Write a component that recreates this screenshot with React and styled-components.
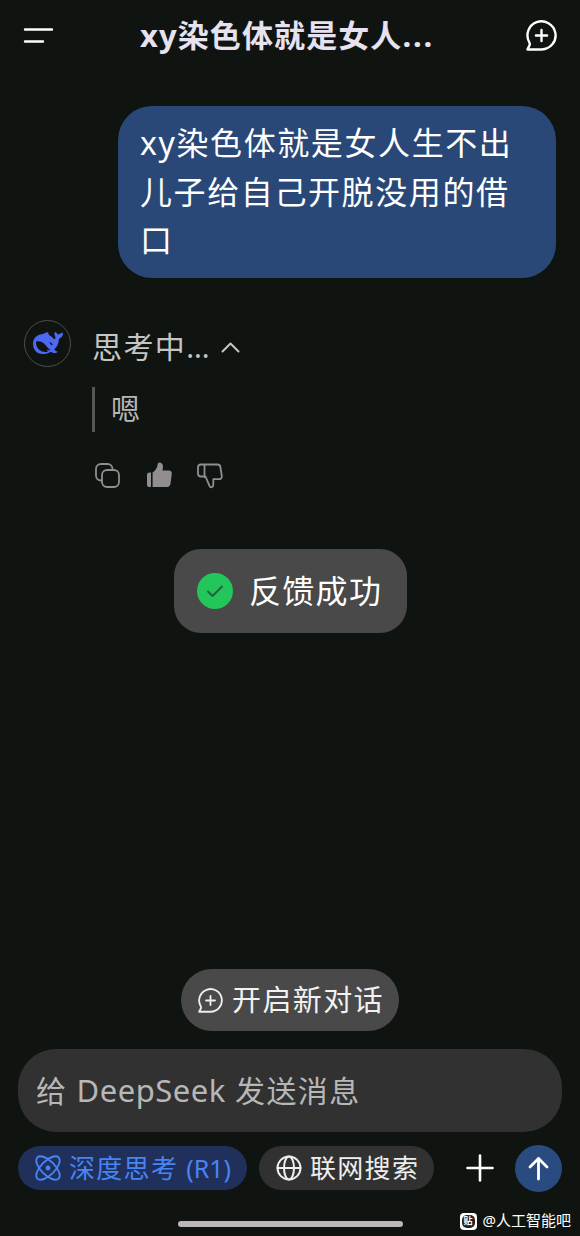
import React from "react"
import styled, { createGlobalStyle } from "styled-components"

const GlobalStyle = createGlobalStyle`
  body {
    margin: 0;
    background: #101411;
  }
  * {
    box-sizing: border-box;
  }
`

const Screen = styled.div`
  position: relative;
  display: flex;
  flex-direction: column;
  width: 580px;
  height: 1236px;
  overflow: hidden;
  background: #101411;
  font-family: "Noto Sans", "Noto Sans CJK SC", sans-serif;
  color: #fff;
`

const Label = styled.span`
  padding-bottom: 1px;
  font-size: ${props => props.$size}px;
  letter-spacing: ${props => props.$spacing || 0}px;
  font-weight: ${props => props.$weight || 400};
  line-height: 1;
  color: ${props => props.$color || "#fff"};
  white-space: nowrap;
`

// Latin letters and dots are set tighter than the Chinese text around them
const Latin = styled.span`
  font-size: ${props => props.$size ? props.$size + "px" : "inherit"};
  letter-spacing: ${props => props.$spacing || 0}px;
`

const Title = styled(Label)`
  margin: 0 6px 0 0;
`

const Icon = styled.svg`
  display: block;
  flex: none;
  fill: none;
  stroke: ${props => props.$color || "#fff"};
  stroke-linecap: round;
  stroke-linejoin: round;
`

const Header = styled.header`
  display: flex;
  flex: none;
  align-items: center;
  justify-content: space-between;
  height: 71px;
  padding: 0 23px;
`

const Conversation = styled.main`
  display: flex;
  flex-direction: column;
  height: 898px;
  padding: 35px 24px 0;
`

const Bubble = styled.div`
  align-self: flex-end;
  width: 438px;
  height: 172px;
  padding: 13px 20px 13px 22px;
  border-radius: 34px;
  background: #294877;
  font-size: 32px;
  letter-spacing: 1.6px;
  line-height: 48.6px;
`

const Reply = styled.div`
  display: flex;
  gap: 21px;
  margin-top: 42px;
`

const Avatar = styled.div`
  display: flex;
  align-items: center;
  justify-content: center;
  width: 47px;
  height: 47px;
  border: 1.5px solid #4b4e4a;
  border-radius: 50%;
`

const ReplyBody = styled.div`
  display: flex;
  flex-direction: column;
`

const Thinking = styled.div`
  display: flex;
  align-items: center;
  gap: 11px;
  height: 54px;
`

const Thought = styled.div`
  display: flex;
  align-items: center;
  height: 45px;
  margin-top: 13px;
  padding: 0 0 2px 16px;
  border-left: 3px solid #555655;
`

const Actions = styled.div`
  display: flex;
  align-items: center;
  gap: 25.5px;
  margin: 30px 0 0 3px;
`

const Toast = styled.div`
  position: absolute;
  top: 549px;
  left: 174px;
  display: flex;
  align-items: center;
  gap: 16px;
  width: 233px;
  height: 84px;
  padding-left: 23px;
  border-radius: 27px;
  background: #484948;
`

const Success = styled.div`
  display: flex;
  align-items: center;
  justify-content: center;
  width: 36px;
  height: 36px;
  border-radius: 50%;
  background: #23c65b;
`

const NewChat = styled.div`
  display: flex;
  flex: none;
  align-self: center;
  align-items: center;
  gap: 9px;
  width: 218px;
  height: 62px;
  padding-left: 17px;
  border-radius: 31px;
  background: #484948;
`

const Composer = styled.div`
  display: flex;
  flex: none;
  align-items: center;
  height: 83px;
  margin: 18px 18px 0;
  padding-left: 18px;
  border-radius: 38px;
  background: #313131;
`

const Toolbar = styled.div`
  display: flex;
  flex: none;
  align-items: center;
  height: 48px;
  margin: 12px 18px 0;
`

const Pill = styled.div`
  display: flex;
  align-items: center;
  gap: 8px;
  width: ${props => props.$width}px;
  height: 44px;
  padding-left: 17px;
  margin-right: 12px;
  border-radius: 22px;
  background: ${props => props.$bg};
`

const Send = styled.div`
  display: flex;
  align-items: center;
  justify-content: center;
  width: 47px;
  height: 47px;
  margin-left: auto;
  border-radius: 50%;
  background: #294b80;
`

const Attach = styled.div`
  margin-left: 20px;
`

const HomeBar = styled.div`
  flex: none;
  align-self: center;
  width: 225px;
  height: 6px;
  margin-top: 29px;
  border-radius: 3px;
  background: #bcb8ba;
`

const Watermark = styled.div`
  position: absolute;
  right: 9px;
  bottom: 6px;
  display: flex;
  align-items: center;
  gap: 6px;
  height: 18px;
`

const Badge = styled.div`
  display: flex;
  align-items: center;
  justify-content: center;
  width: 17px;
  height: 17px;
  border-radius: 4px;
  background: #fff;
`

const BadgeInner = styled.div`
  display: flex;
  align-items: center;
  justify-content: center;
  width: 13px;
  height: 13px;
  border-radius: 5px;
  background: #222522;
`

function ChatPlus({ size, color, weight }) {
  return (
    <Icon width={size} height={size} viewBox="0 0 30 30" $color={color} strokeWidth={weight}>
      <path d="M1.4 28.5h13.7A13.6 13.6 0 1 0 3.3 21.8c.5.8.5 1.6.2 2.5z" />
      <path d="M15 9.6v10.8M9.6 15h10.8" />
    </Icon>
  )
}

function Whale() {
  return (
    <svg width="32" height="25" viewBox="0 0 96 75">
      <path
        fill="#4c69f5"
        d="M3 38C3 21 17 9 34 9c4-3 10-6 15-5-2 4 1 7 5 10 6 3 9 8 14 11 3-2 3-5 1-9-2-4-2-8-1-13 4 0 7 4 10 8 4-4 9-5 15-6 1 9-4 15-12 18-1 14-5 24-14 31 2 6 6 7 11 8-5 5-15 5-21 0C39 72 19 71 10 59 5 53 3 46 3 38z"
      />
      <path
        fill="#101411"
        d="M12 32c8-3 17-1 25 6 7 7 11 14 18 19-3 2-6 1-9-1-1 3 0 4 2 6C27 67 11 51 12 32z"
      />
      <path fill="#101411" d="M52 34c4-1 9 3 10 9-3-1-4-1-6-3-1-2-3-3-4-6z" />
    </svg>
  )
}

function Thumb({ filled }) {
  return (
    <Icon
      width="26"
      height="27"
      viewBox="0 0 26 27"
      $color="#918e91"
      strokeWidth="1.8"
      transform={filled ? undefined : "scale(1 -1)"}
    >
      {filled ? (
        <g fill="#918e91" stroke="none">
          <path d="M5 10.5H3.5A2.5 2.5 0 0 0 1 13v9.5A2.5 2.5 0 0 0 3.5 25H5z" />
          <path d="M6.6 10.5c3-2 4.5-4.5 5-8C12 .5 14 0 15.6 1.2c2 1.6 1.5 4.5.8 7.4H23c2 0 3 1.4 2.8 3.2l-1.3 10c-.3 2-1.4 3.2-3.5 3.2H6.6z" />
        </g>
      ) : (
        <path d="M7.5 12v12.5M7.5 12.5h1l4-9.3c1-2.4 3.8-1.5 3.8.8v5.8h5.5c2 0 3.3 1.3 3 3.3l-1.4 8.9c-.3 1.7-1.3 2.5-3 2.5H4c-2 0-3-1-3-3v-6c0-2 1-3 3-3z" />
      )}
    </Icon>
  )
}

function App() {
  return (
    <Screen>
      <GlobalStyle />
      <Header>
        <Icon width="31" height="18" strokeWidth="2.4">
          <path d="M2 2.5h27M2 14.5h18" />
        </Icon>
        <Title as="h1" $size={31} $spacing={1.1} $weight={700} $color="#e6e2ef">
          xy染色体就是女人<Latin $spacing={1.8}>...</Latin>
        </Title>
        <ChatPlus size={31} weight={2.3} />
      </Header>

      <Conversation>
        <Bubble>xy染色体就是女人生不出儿子给自己开脱没用的借口</Bubble>
        <Reply>
          <Avatar>
            <Whale />
          </Avatar>
          <ReplyBody>
            <Thinking>
              <Label $size={30} $spacing={1.4} $color="#c6c5c6">
                思考中<Latin $size={29}>...</Latin>
              </Label>
              <Icon width="19" height="12" $color="#c6c5c6" strokeWidth="2">
                <path d="M1.5 10.5l8-8 8 8" />
              </Icon>
            </Thinking>
            <Thought>
              <Label $size={29} $color="#b8b7b8">嗯</Label>
            </Thought>
            <Actions>
              <Icon width="25" height="25" $color="#918e91" strokeWidth="1.8">
                <rect x="7" y="7" width="17" height="17" rx="5" />
                <path d="M6.8 17.5H6a5 5 0 0 1-5-5V6a5 5 0 0 1 5-5h6.5a5 5 0 0 1 5 5v.8" />
              </Icon>
              <Thumb filled />
              <Thumb />
            </Actions>
          </ReplyBody>
        </Reply>
      </Conversation>

      <Toast>
        <Success>
          <Icon width="18" height="14" $color="#24613b" strokeWidth="2">
            <path d="M2 7.5l4.5 4.5L16 2.5" />
          </Icon>
        </Success>
        <Label $size={32} $spacing={1.3}>反馈成功</Label>
      </Toast>

      <NewChat>
        <ChatPlus size={25} color="#eee" weight={2.2} />
        <Label $size={29} $spacing={1.4} $color="#f2f2f2">开启新对话</Label>
      </NewChat>
      <Composer>
        <Label $size={30} $spacing={1.4} $color="#b7b7b7">
          给 <Latin $size={31} $spacing={0.5}>DeepSeek</Latin> 发送消息
        </Label>
      </Composer>
      <Toolbar>
        <Pill $width={229} $bg="#20305a">
          <Icon width="26" height="26" viewBox="0 0 26 26" $color="#4784f5" strokeWidth="1.9">
            <ellipse cx="13" cy="13" rx="15" ry="7" transform="rotate(45 13 13)" />
            <ellipse cx="13" cy="13" rx="15" ry="7" transform="rotate(-45 13 13)" />
            <circle cx="13" cy="13" r="1.5" fill="#4784f5" />
          </Icon>
          <Label $size={26} $spacing={1.3} $color="#4784f5">
            深度思考 <Latin $size={25}>(R1)</Latin>
          </Label>
        </Pill>
        <Pill $width={175} $bg="#313131">
          <Icon width="26" height="26" $color="#eee" strokeWidth="2">
            <circle cx="13" cy="13" r="11.5" />
            <ellipse cx="13" cy="13" rx="5" ry="11.5" />
            <path d="M1.5 13h23" />
          </Icon>
          <Label $size={26} $spacing={1.3} $color="#eee">联网搜索</Label>
        </Pill>
        <Attach>
          <Icon width="28" height="28" strokeWidth="2.6">
            <path d="M14 1.5v25M1.5 14h25" />
          </Icon>
        </Attach>
        <Send>
          <Icon width="21" height="25" strokeWidth="2.8">
            <path d="M10.5 23V2.5M2 11l8.5-8.5L19 11" />
          </Icon>
        </Send>
      </Toolbar>
      <HomeBar />
      <Watermark>
        <Badge>
          <BadgeInner>
            <Label $size={9} $weight={700}>贴</Label>
          </BadgeInner>
        </Badge>
        <Label $size={15}>@人工智能吧</Label>
      </Watermark>
    </Screen>
  )
}

export default App
